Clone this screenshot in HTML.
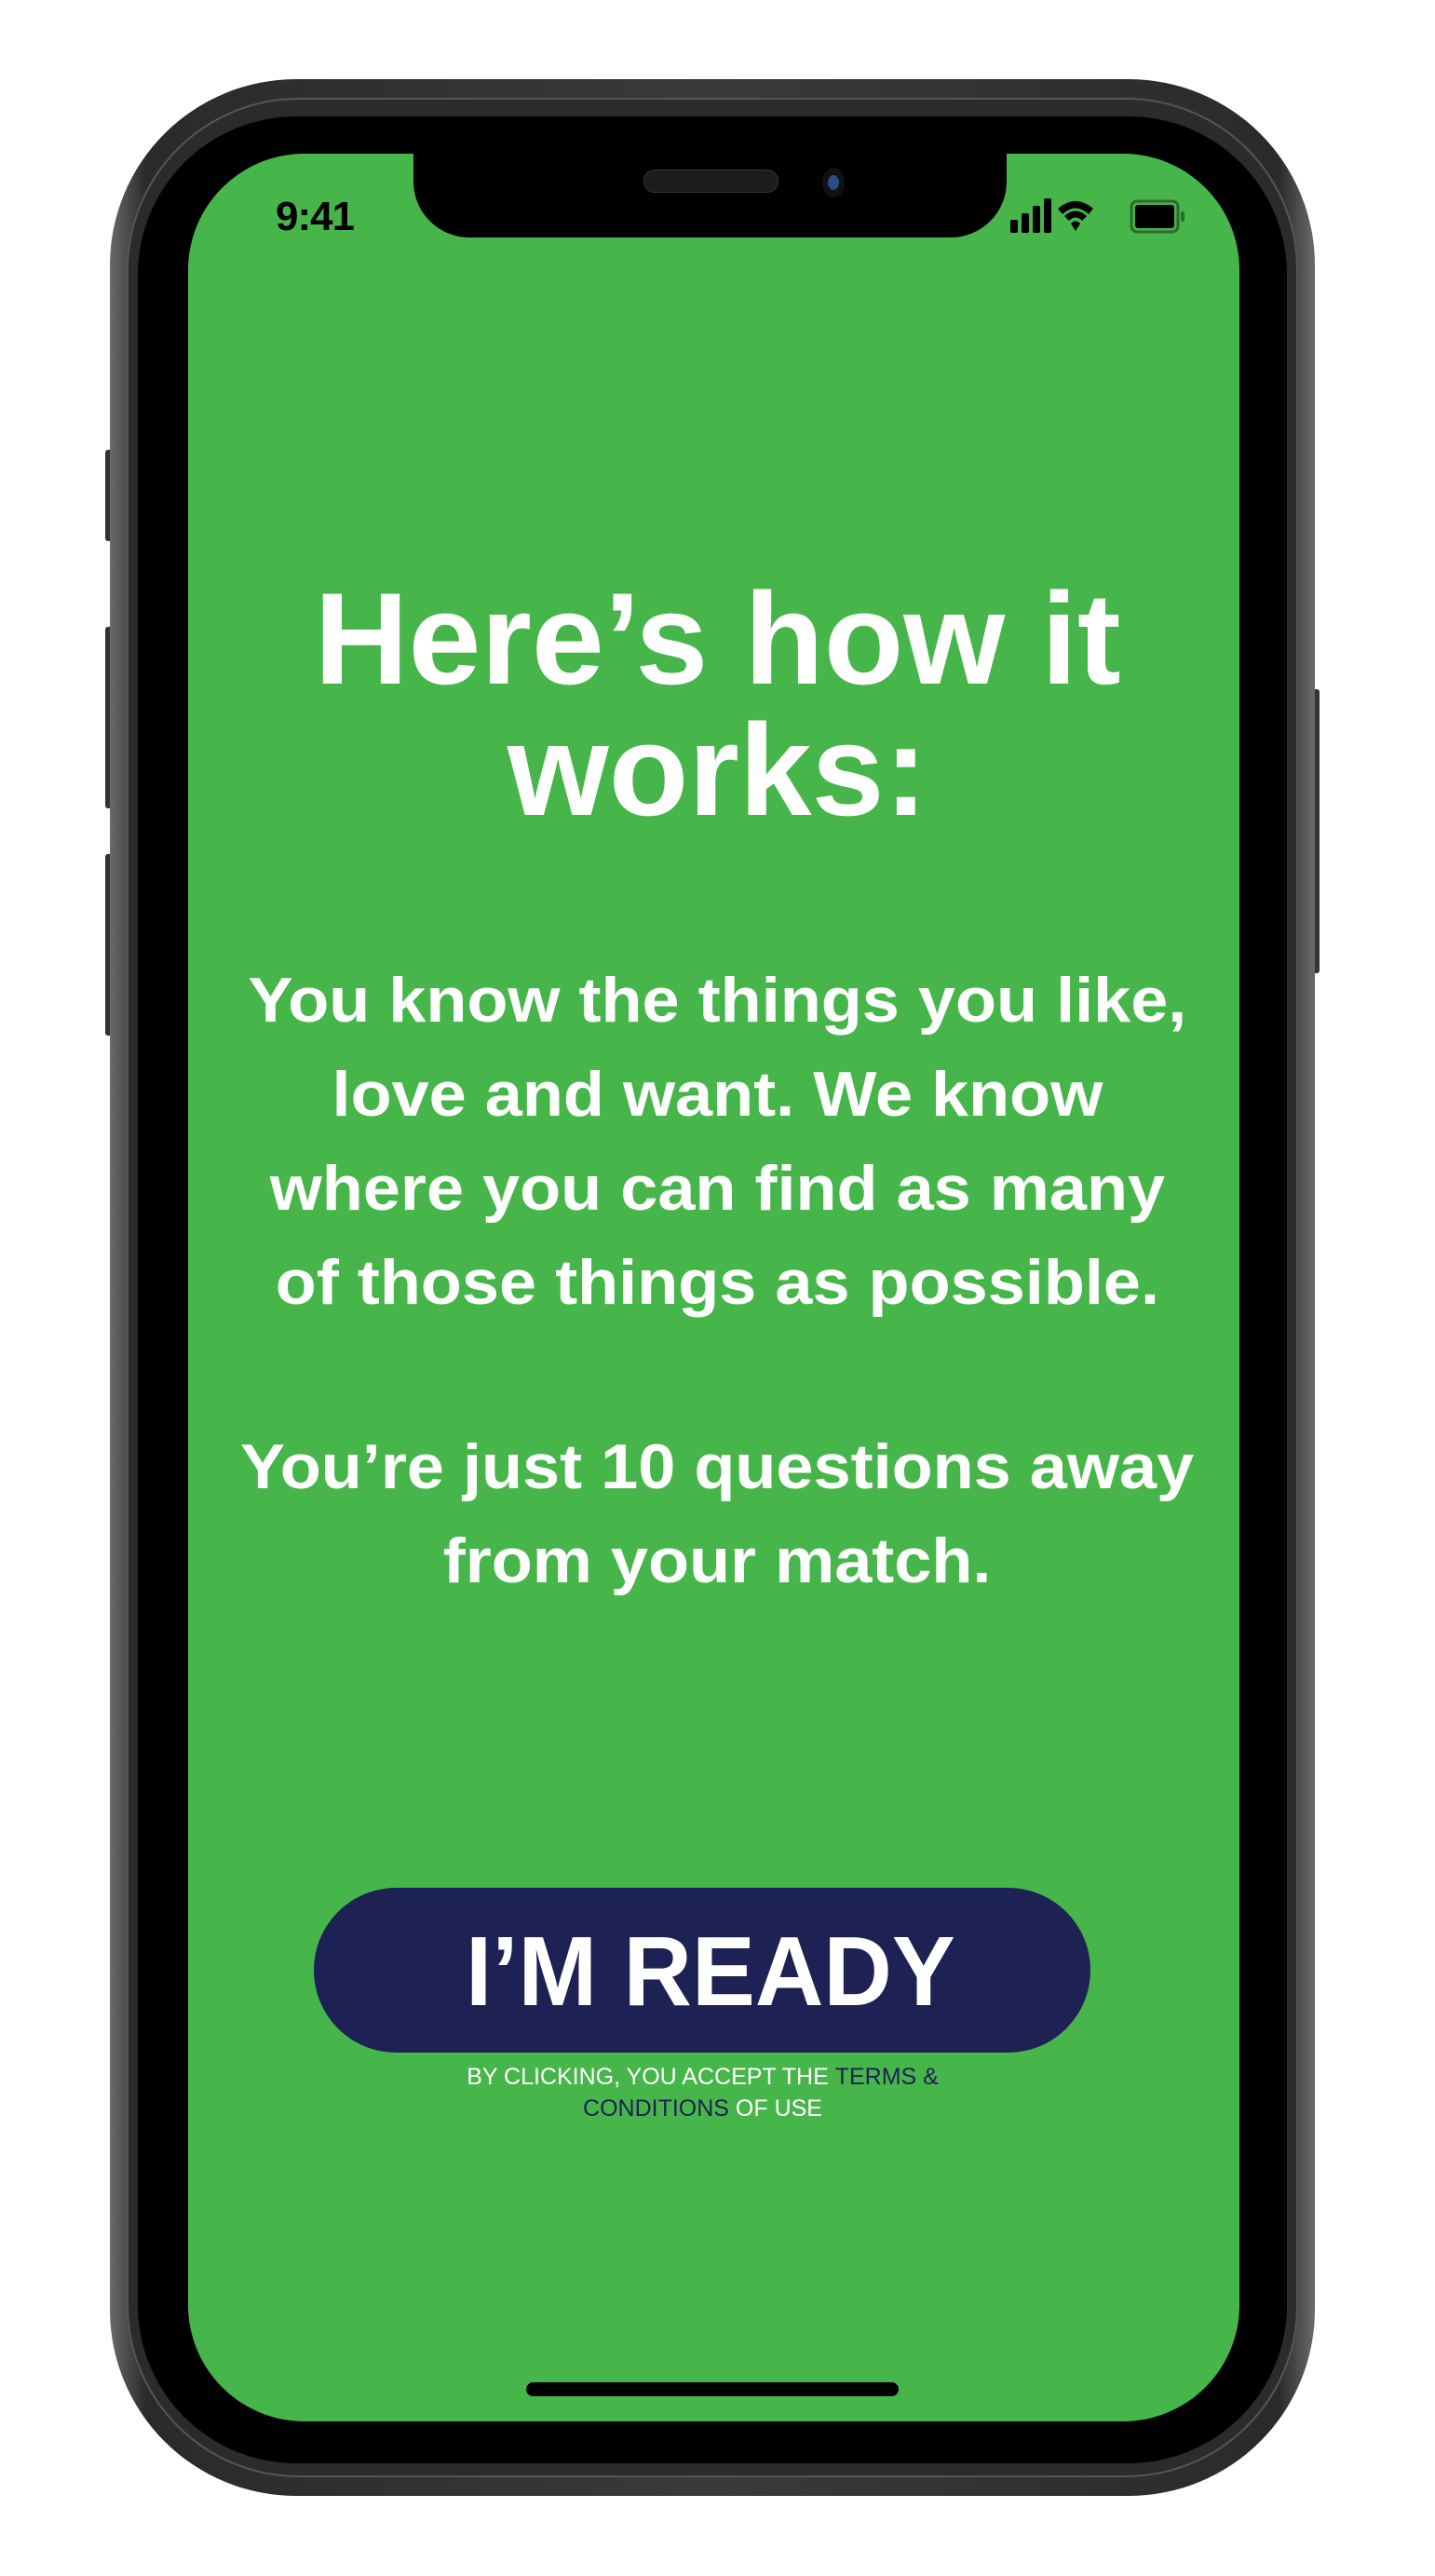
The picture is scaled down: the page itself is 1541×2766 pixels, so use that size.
<!DOCTYPE html>
<html><head><meta charset="utf-8"><style>
html,body{margin:0;padding:0;background:#fff;}
body{width:1541px;height:2766px;position:relative;overflow:hidden;font-family:"Liberation Sans",sans-serif;}
.abs{position:absolute;}
.frame{left:118px;top:85px;width:1294px;height:2595px;border-radius:200px;background:linear-gradient(90deg,#6a6a6c,#2a2a2c 3%,#3a3a3c 50%,#2a2a2c 97%,#6a6a6c);}
.bez1{left:136px;top:105px;width:1258px;height:2555px;border-radius:185px;background:#2b2b2d;border:2px solid #555;box-sizing:border-box;}
.bez2{left:148px;top:125px;width:1234px;height:2520px;border-radius:170px;background:#000;}
.screen{left:202px;top:165px;width:1129px;height:2435px;border-radius:125px;background:#47b64a;overflow:hidden;}
.notch{left:444px;top:150px;width:637px;height:105px;background:#000;border-radius:0 0 60px 60px;}
.line{position:absolute;left:0;width:1541px;text-align:center;color:#fff;font-weight:bold;white-space:nowrap;}
.line span{display:inline-block;}
</style></head><body>
<div class="abs" style="left:113px;top:483px;width:10px;height:98px;background:#333;border-radius:3px"></div>
<div class="abs" style="left:113px;top:673px;width:10px;height:195px;background:#333;border-radius:3px"></div>
<div class="abs" style="left:113px;top:917px;width:10px;height:195px;background:#333;border-radius:3px"></div>
<div class="abs" style="left:1407px;top:740px;width:10px;height:305px;background:#333;border-radius:3px"></div>
<div class="abs frame"></div>
<div class="abs bez1"></div>
<div class="abs bez2"></div>
<div class="abs screen"></div>
<div class="abs notch"></div>
<div class="abs" style="left:691px;top:182px;width:143px;height:23px;background:#1c1c1c;border-radius:12px;border:1px solid #333"></div>
<div class="abs" style="left:883px;top:180px;width:24px;height:32px;background:#111;border-radius:50%"></div>
<div class="abs" style="left:889px;top:188px;width:12px;height:16px;background:#2a4d8a;border-radius:50%"></div>
<div class="abs" style="left:296px;top:208px;font-size:44px;font-weight:bold;color:#000;letter-spacing:-1px">9:41</div>
<svg class="abs" style="left:1080px;top:210px" width="210" height="45" viewBox="0 0 210 45">
<rect x="5" y="26" width="8" height="14" rx="2" fill="#000"/><rect x="17" y="19" width="8" height="21" rx="2" fill="#000"/><rect x="29" y="11" width="8" height="29" rx="2" fill="#000"/><rect x="41" y="3" width="8" height="37" rx="2" fill="#000"/>
<path d="M56 14 Q75 -2 94 14 L89 20 Q75 7 61 20Z M63 22 Q75 11 87 22 L82 27 Q75 20 68 27Z M70 30 Q75 25 80 30 L75 38Z" fill="#000"/>
<rect x="135" y="6" width="50" height="33" rx="6" fill="none" stroke="#2d6b30" stroke-width="3"/><rect x="139" y="10" width="42" height="25" rx="3" fill="#000"/><rect x="188" y="17" width="4" height="11" rx="2" fill="#2d6b30"/>
</svg>
<div class="line" style="top:615px;font-size:140px;line-height:141px"><span>Here’s how it<br>works:</span></div>
<div class="line" style="top:1024px;font-size:68px;line-height:101px"><span style="transform:scaleX(1.06)">You know the things you like,<br>love and want. We know<br>where you can find as many<br>of those things as possible.</span></div>
<div class="line" style="top:1525px;font-size:68px;line-height:101px"><span style="transform:scaleX(1.06)">You’re just 10 questions away<br>from your match.</span></div>
<div class="abs" style="left:337px;top:2027px;width:834px;height:177px;border-radius:89px;background:#1e2154"></div>
<div class="line" style="top:2052px;font-size:106px;line-height:130px;left:-8px"><span style="transform:scaleX(0.96)">I’M READY</span></div>
<div class="line" style="top:2213px;font-size:25px;line-height:34px;font-weight:normal;left:-16px"><span>BY CLICKING, YOU ACCEPT THE <span style="color:#1e2154">TERMS &amp;</span><br><span style="color:#1e2154">CONDITIONS</span> OF USE</span></div>
<div class="abs" style="left:565px;top:2558px;width:400px;height:15px;border-radius:8px;background:#000"></div>
</body></html>
